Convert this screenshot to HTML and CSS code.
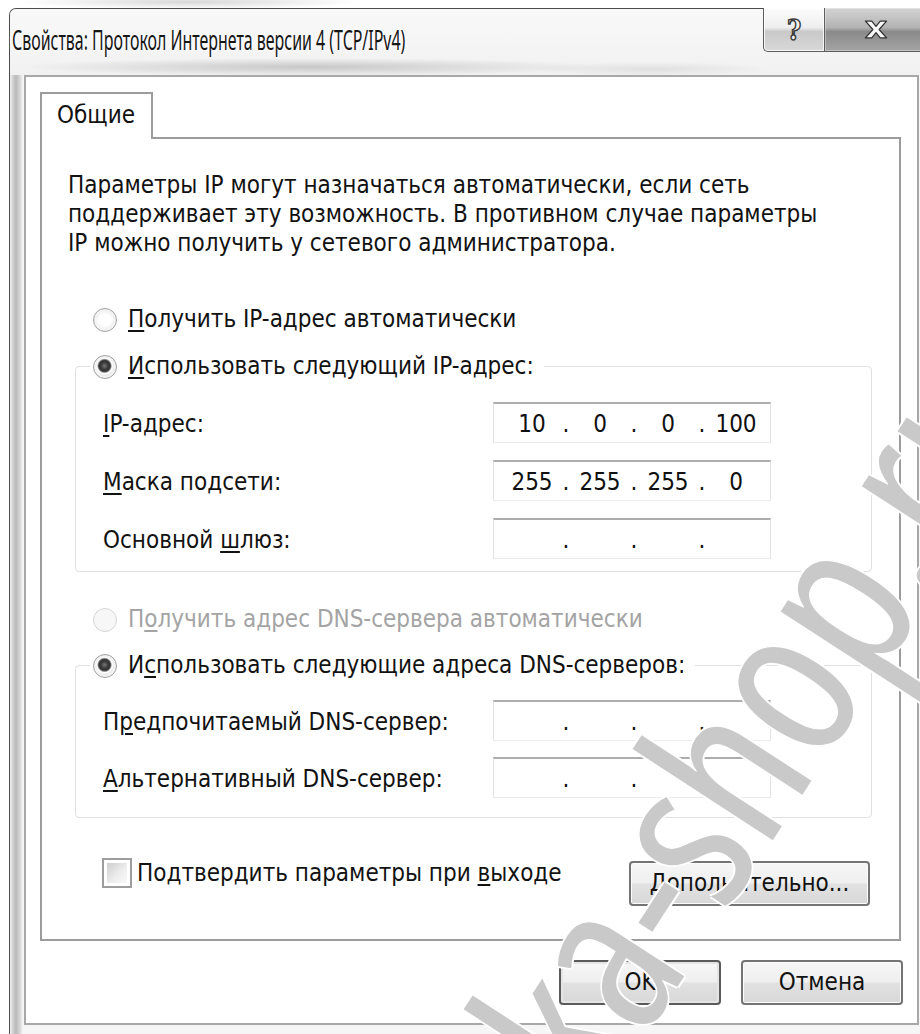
FILE: index.html
```html
<!DOCTYPE html>
<html lang="ru">
<head>
<meta charset="utf-8">
<title>Свойства: Протокол Интернета версии 4 (TCP/IPv4)</title>
<link rel="stylesheet" href="styles.css">
</head>
<body>
<div class="window">
  <div class="titlebar">
    <div class="title"><span>Свойства: Протокол Интернета версии 4 (TCP/IPv4)</span></div>
    <div class="caption-buttons">
      <div class="cap-btn help"><span>?</span></div>
      <div class="cap-btn close">
        <svg width="24" height="19" viewBox="0 0 22 18"><path d="M1 1h6l4 5 4-5h6l-7 8 7 8h-6l-4-5-4 5H1l7-8z" fill="#f7f7f7" stroke="#333" stroke-width="1.2" stroke-linejoin="round"/></svg>
      </div>
    </div>
  </div>

  <div class="client">
    <div class="tabstrip"><div class="tab">Общие</div></div>

    <div class="tabpage">
      <p class="intro">Параметры IP могут назначаться автоматически, если сеть<br>поддерживает эту возможность. В противном случае параметры<br>IP можно получить у сетевого администратора.</p>

      <div class="choice"><span class="radio"></span><span><u>П</u>олучить IP-адрес автоматически</span></div>

      <fieldset class="group group-ip">
        <legend><span class="choice"><span class="radio checked"></span><span><u>И</u>спользовать следующий IP-адрес:</span></span></legend>
        <div class="field-row">
          <span class="field-label"><u>I</u>P-адрес:</span>
          <div class="ipbox"><span>10</span><i>.</i><span>0</span><i>.</i><span>0</span><i>.</i><span>100</span></div>
        </div>
        <div class="field-row">
          <span class="field-label"><u>М</u>аска подсети:</span>
          <div class="ipbox"><span>255</span><i>.</i><span>255</span><i>.</i><span>255</span><i>.</i><span>0</span></div>
        </div>
        <div class="field-row">
          <span class="field-label">Основной <u>ш</u>люз:</span>
          <div class="ipbox"><span></span><i>.</i><span></span><i>.</i><span></span><i>.</i><span></span></div>
        </div>
      </fieldset>

      <div class="choice choice-dns disabled"><span class="radio"></span><span>П<u>о</u>лучить адрес DNS-сервера автоматически</span></div>

      <fieldset class="group group-dns">
        <legend><span class="choice"><span class="radio checked"></span><span>И<u>с</u>пользовать следующие адреса DNS-серверов:</span></span></legend>
        <div class="field-row dns-row">
          <span class="field-label">П<u>р</u>едпочитаемый DNS-сервер:</span>
          <div class="ipbox"><span></span><i>.</i><span></span><i>.</i><span></span><i>.</i><span></span></div>
        </div>
        <div class="field-row dns-row">
          <span class="field-label"><u>А</u>льтернативный DNS-сервер:</span>
          <div class="ipbox"><span></span><i>.</i><span></span><i>.</i><span></span><i>.</i><span></span></div>
        </div>
      </fieldset>

      <div class="confirm-row">
        <div class="check-item"><span class="checkbox"></span><span>Подтвердить параметры при <u>в</u>ыходе</span></div>
        <button type="button" class="btn btn-advanced"><span><u>Д</u>ополнительно...</span></button>
      </div>
    </div>

    <div class="dialog-buttons">
      <button type="button" class="btn btn-default">OK</button>
      <button type="button" class="btn">Отмена</button>
    </div>
  </div>
</div>

<div class="watermark">ka-shop.ru</div>
</body>
</html>
```

FILE: styles.css
```css
* {
  box-sizing: border-box;
}

html,
body {
  margin: 0;
  height: 100%;
}

body {
  position: relative;
  overflow: hidden;
  background:
    radial-gradient(ellipse 170px 7px at 190px 2px, rgba(140, 140, 140, 0.35), transparent),
    #ffffff;
  color: #121212;
  font-family: "DejaVu Sans Condensed", "DejaVu Sans", sans-serif;
  font-stretch: condensed;
  font-size: 24px;
  line-height: 29px;
}

u {
  text-decoration-thickness: 2px;
  text-underline-offset: 3px;
}

/* ---------- window frame ---------- */
.window {
  width: 930px;
  margin: 8px 0 0 9px;
  padding: 0 0 9px 14px;
  border-top: 1px solid #4c4c4c;
  border-left: 1px solid #4c4c4c;
  border-top-left-radius: 7px;
  background:
    linear-gradient(to right, #f2f2f2 0, #d0d0d0 3px, #b9b9b9 6px, #d6d6d6 10px, #f6f6f6 13px, #f6f6f6 100%);
}

.titlebar {
  display: flex;
  align-items: flex-start;
  height: 66px;
  margin-left: -14px;
  padding-left: 2px;
  background:
    radial-gradient(ellipse 290px 9px at 300px 58px, rgba(110, 110, 110, 0.32), transparent),
    radial-gradient(ellipse 120px 7px at 640px 60px, rgba(140, 140, 140, 0.18), transparent),
    linear-gradient(#f9f9f9, #f1f1f1);
  border-top-left-radius: 6px;
}

.title {
  flex: 1;
  padding-top: 15px;
  font-family: "Noto Sans", "Open Sans", sans-serif;
  font-size: 27px;
  line-height: 32px;
  color: #161616;
  white-space: nowrap;
  text-shadow: 0 0 8px #ffffff, 0 0 4px #ffffff;
}

.title span {
  display: inline-block;
  transform: scaleX(0.59);
  transform-origin: 0 50%;
}

.caption-buttons {
  display: flex;
  margin-top: -1px;
  margin-right: 11px;
}

.cap-btn {
  height: 44px;
  display: flex;
  align-items: center;
  justify-content: center;
  border: 1px solid #5d5d5d;
  border-top: none;
}

.cap-btn.help {
  width: 61px;
  border-bottom-left-radius: 5px;
  border-right: none;
  background: linear-gradient(#fdfdfd 0, #eeeeee 45%, #c9c9c9 55%, #d8d8d8 100%);
  box-shadow: inset 0 0 0 1px rgba(255, 255, 255, 0.8);
}

.cap-btn.help span {
  font-family: "DejaVu Serif", serif;
  font-weight: bold;
  font-size: 27px;
  color: #f4f4f4;
  -webkit-text-stroke: 1.4px #3a3a3a;
  margin-top: 2px;
}

.cap-btn.close {
  width: 104px;
  border-bottom-right-radius: 5px;
  background: linear-gradient(#d4d4d4 0, #b3b3b3 45%, #8a8a8a 55%, #a4a4a4 100%);
  box-shadow: inset 0 0 0 1px rgba(255, 255, 255, 0.35);
}

/* ---------- client area ---------- */
.client {
  width: 895px;
  padding: 15px 14px 18px 14px;
  border: 2px solid #a8a8a8;
  background: #ffffff;
}

.tabstrip {
  display: flex;
  height: 45px;
}

.tab {
  position: relative;
  z-index: 1;
  width: 113px;
  height: 47px;
  padding: 7px 0 0 15px;
  border: 2px solid #9c9c9c;
  border-bottom: none;
  background: #ffffff;
}

.tabpage {
  width: 861px;
  padding: 32px 0 33px 0;
  border: 2px solid #9c9c9c;
  background: #ffffff;
}

.intro {
  margin: 0 0 0 26px;
}

/* ---------- radio choices ---------- */
.choice {
  display: flex;
  align-items: center;
  gap: 11px;
  height: 29px;
}

.tabpage > .choice {
  margin: 47px 0 0 51px;
}

.tabpage > .choice-dns {
  margin-top: 33px;
}

.choice.disabled {
  color: #a4a4a4;
}

.radio {
  flex: none;
  width: 24px;
  height: 24px;
  border-radius: 50%;
  border: 1px solid #a2a2a2;
  background: radial-gradient(circle, #ffffff 0 35%, #e6e6e6 80%, #f4f4f4 100%);
  box-shadow: inset 0 0 0 2px #f3f3f3;
}

.choice.disabled .radio {
  border-color: #d6d6d6;
  background: #f7f7f7;
  box-shadow: none;
}

.radio.checked {
  background: radial-gradient(circle at 48% 45%, #777777 0, #444444 3px, #2e2e2e 5px, #555555 6px, #ffffff 7.5px, #f0f0f0 9px, #d8d8d8 11px, #ececec 12px);
}

/* ---------- group boxes ---------- */
.group {
  width: 797px;
  min-inline-size: 0;
  margin: 18px 0 0 33px;
  padding: 12px 0 4px 27px;
  border: 1px solid #e0e0e0;
  border-radius: 4px;
}

.group-dns {
  margin-top: 17px;
  padding-bottom: 11px;
}

.group legend {
  margin-left: -13px;
  padding: 0 10px 0 3px;
}

.field-row {
  display: grid;
  grid-template-columns: 390px 278px;
  align-items: center;
  height: 58px;
}

.field-row.dns-row {
  height: 57px;
}

.field-label {
  padding-top: 4px;
}

.ipbox {
  display: flex;
  align-items: center;
  height: 41px;
  padding: 3px 0 0 5px;
  border-top: 2px solid #adadad;
  border-left: 1px solid #e2e2e2;
  border-right: 1px solid #e2e2e2;
  border-bottom: 1px solid #ebebeb;
  background: #ffffff;
  color: #101010;
}

.ipbox span {
  width: 66px;
  text-align: center;
}

.ipbox i {
  width: 2px;
  font-style: normal;
  display: flex;
  justify-content: center;
}

/* ---------- confirm row ---------- */
.confirm-row {
  display: flex;
  align-items: flex-start;
  margin: 40px 0 0 60px;
  padding-right: 29px;
}

.check-item {
  display: flex;
  align-items: center;
  gap: 5px;
  height: 30px;
}

.checkbox {
  flex: none;
  width: 30px;
  height: 30px;
  padding: 3px;
  border: 2px solid #9d9d9d;
  background: linear-gradient(135deg, #cdcdcd 0, #ececec 55%, #fafafa 100%) content-box, #ffffff;
}

/* ---------- push buttons ---------- */
.btn {
  height: 45px;
  display: flex;
  align-items: center;
  justify-content: center;
  padding: 0;
  border: 2px solid #747474;
  border-radius: 4px;
  background: linear-gradient(#f6f6f6 0, #efefef 48%, #e1e1e1 52%, #d8d8d8 100%);
  box-shadow: inset 0 0 0 1px #fcfcfc;
  color: #121212;
  font: inherit;
}

.btn-advanced {
  width: 241px;
  margin: 3px 0 0 auto;
}

.dialog-buttons {
  display: flex;
  justify-content: flex-end;
  gap: 20px;
  margin-top: 19px;
}

.dialog-buttons .btn {
  width: 162px;
}

.btn-default {
  border-color: #5a5a5a;
  box-shadow: inset 0 0 0 2px #e4e4e4;
}

/* ---------- watermark lying over the dialog ---------- */
.watermark {
  position: absolute;
  left: 617px;
  top: 906px;
  font-family: "Open Sans", "Noto Sans", sans-serif;
  font-weight: 400;
  font-size: 220px;
  line-height: 220px;
  color: #c9c9c9;
  white-space: nowrap;
  transform-origin: 0 100%;
  transform: rotate(-57deg);
  text-shadow: 2px 0 #fff, -2px 0 #fff, 0 2px #fff, 0 -2px #fff;
  pointer-events: none;
}
```
